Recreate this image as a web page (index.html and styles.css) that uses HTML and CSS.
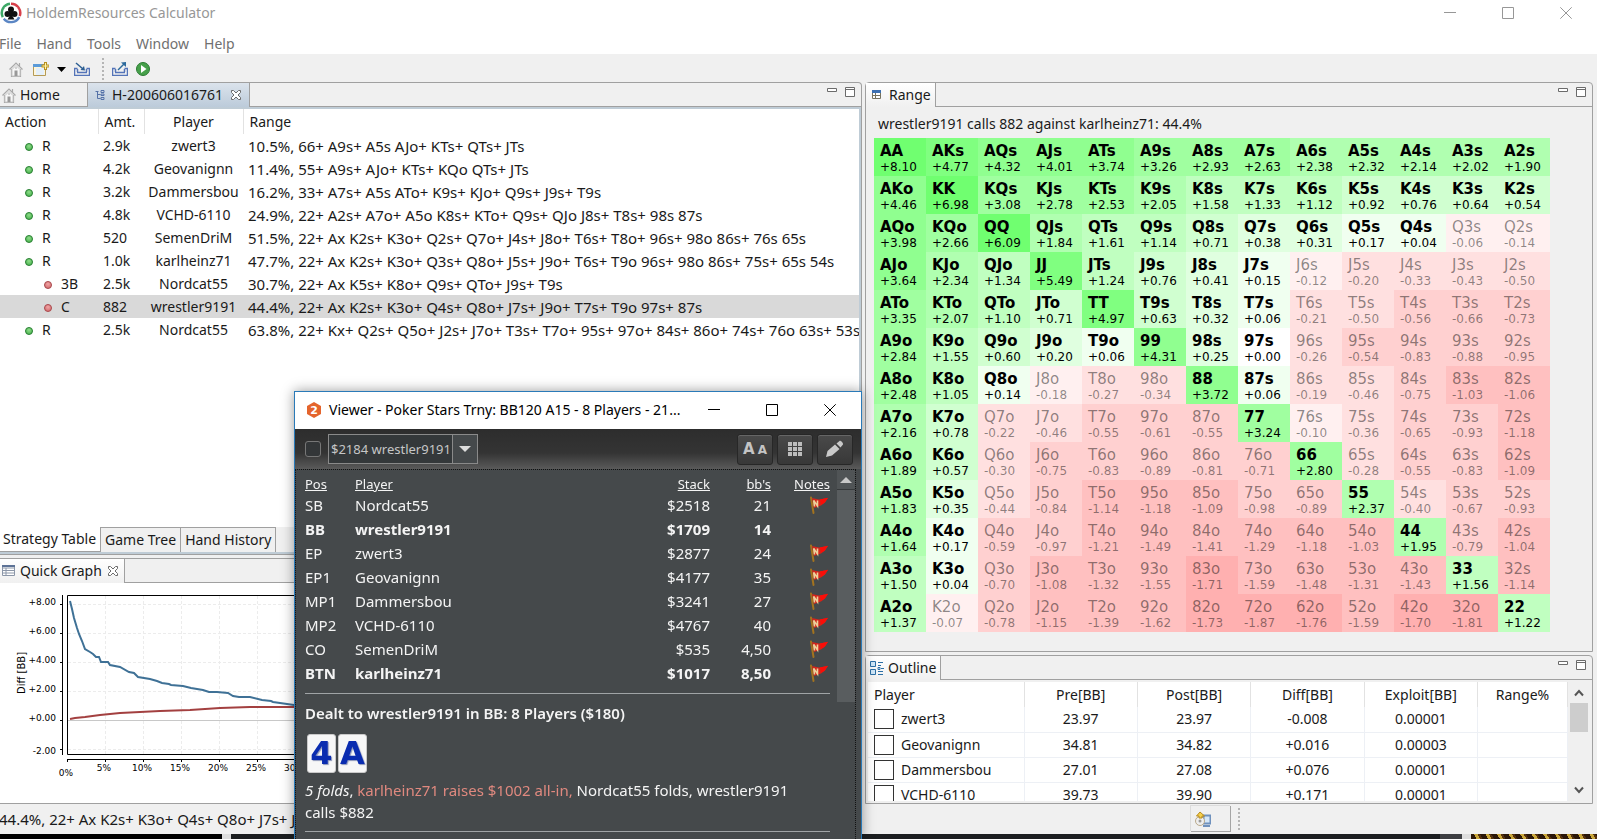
FILE: index.html
```html
<!DOCTYPE html>
<html lang="en">
<head>
    <meta charset="UTF-8">
    <meta name="viewport" content="width=device-width, initial-scale=1.0">
    <title>HoldemResources Calculator</title>
    <link rel="stylesheet" href="styles.css">
</head>
<body>

    <!-- shared icons -->
    <svg class="sprite" aria-hidden="true">
        <symbol id="house" viewBox="0 0 14 16">
            <path d="M2.5 8v7.5h9V8M.5 8.500 7 2l6.500 6.500M10.500 5V2" fill="none" stroke="#a9a9a9" stroke-width="1.200"/>
            <path d="M3 8.500 7 4.500l4 4V15H3z" fill="#f7f7f7" stroke="#c9c9c9"/>
            <path d="M5.500 9.500h3V15h-3z" fill="#999"/>
            <path d="M7 6v2" stroke="#aaa"/>
        </symbol>
        <symbol id="cross" viewBox="0 0 12 12">
            <path d="M1.500 1.500h2L6 4l2.500-2.500h2v2L8 6l2.500 2.500v2h-2L6 8l-2.500 2.500h-2v-2L4 6 1.500 3.500z" fill="#fff" stroke="#6b6b6b"/>
        </symbol>
        <symbol id="part-min" viewBox="0 0 10 10"><path d="M.5 1.500h9v3h-9z" fill="#fff" stroke="#6b6b6b"/></symbol>
        <symbol id="part-max" viewBox="0 0 10 10"><path d="M.5.5h9v9h-9zM.5 2.500h9" fill="#fff" stroke="#6b6b6b"/></symbol>
        <symbol id="win-min" viewBox="0 0 12 12"><path d="M0 5.500h12" fill="none" stroke="currentColor"/></symbol>
        <symbol id="win-max" viewBox="0 0 12 12"><path d="M.5.5h11v11H.5z" fill="none" stroke="currentColor"/></symbol>
        <symbol id="win-close" viewBox="0 0 12 12"><path d="m.3.3 11.400 11.400M11.700.3.3 11.700" fill="none" stroke="currentColor"/></symbol>
        <symbol id="flag" viewBox="0 0 20 18">
            <path d="M2 1.500 4.500 17" stroke="#a3731f" stroke-width="2" stroke-linecap="round"/>
            <path d="M3 2 10 3.500l9-1.500-3 4.500-4 3-7 2.500z" fill="#d3261c"/>
            <path d="M11 3.500 19 1.800l-3.500 5-3.500 2z" fill="#fb0d08"/>
            <path d="m5.500 10.500-.8-6 3.800 5.500V4.500" fill="none" stroke="#ecd29c" stroke-width="1.600"/>
        </symbol>
    </svg>

    <!-- title bar -->
    <header class="titlebar">
        <svg class="app-icon" viewBox="0 0 22 22" aria-hidden="true">
            <path d="M11 2a9 9 0 0 1 8.500 12" fill="none" stroke="#d8404a" stroke-width="3"/>
            <path d="M19 15a9 9 0 0 1-15 1.500" fill="none" stroke="#5b86c4" stroke-width="3"/>
            <path d="M3 15A9 9 0 0 1 10 2" fill="none" stroke="#3da866" stroke-width="3"/>
            <circle cx="11" cy="11" r="8" fill="#fff"/>
            <g fill="#111"><circle cx="11" cy="7.500" r="3"/><circle cx="7.500" cy="12" r="3"/><circle cx="14.500" cy="12" r="3"/><path d="M10 9h2l.5 5 2 3.500h-7l2-3.500z"/></g>
        </svg>
        <h1>HoldemResources Calculator</h1>
        <div class="window-buttons">
            <button type="button" aria-label="Minimize"><svg width="12" height="12"><use href="#win-min"/></svg></button>
            <button type="button" aria-label="Maximize"><svg width="12" height="12"><use href="#win-max"/></svg></button>
            <button type="button" aria-label="Close"><svg width="12" height="12"><use href="#win-close"/></svg></button>
        </div>
    </header>

    <nav class="menubar">
        <button type="button">File</button>
        <button type="button">Hand</button>
        <button type="button">Tools</button>
        <button type="button">Window</button>
        <button type="button">Help</button>
    </nav>

    <div class="toolbar">
        <button type="button" aria-label="Home"><svg width="14" height="16"><use href="#house"/></svg></button>
        <button type="button" class="tool-new" aria-label="New hand">
            <svg width="16" height="15" viewBox="0 0 16 15">
                <path d="M.5 2.500h12v11H.5z" fill="#fdf6dc" stroke="#b59a55"/>
                <path d="M0 2h10v3H0z" fill="#5b9bd9"/>
                <path d="M3 6h8v7H3z" fill="#e4effa"/>
                <path d="M12.500 0v8M8.500 4h8" stroke="#b8901f" stroke-width="3"/>
                <path d="M12.500 1v6M9.500 4h6" stroke="#fff3a8"/>
            </svg>
        </button>
        <button type="button" class="tool-menu" aria-label="New menu"><svg width="9" height="5"><path d="M0 0h9L4.500 5z"/></svg></button>
        <button type="button" class="tool-import" aria-label="Import">
            <svg width="16" height="14" viewBox="0 0 16 14">
                <path d="M3.500 6.500h-3v7h15v-7h-3M3 10.500h10M3.500 7v3M12.500 7v3" fill="none" stroke="#5474b8" stroke-width="1.500"/>
                <path d="m2 1 7 6" stroke="#2d5f93" stroke-width="1.500"/><path d="M11 8.500 6.500 8 10 4z" fill="#2d5f93"/>
            </svg>
        </button>
        <span class="grip"></span>
        <button type="button" class="tool-export" aria-label="Export">
            <svg width="16" height="14" viewBox="0 0 16 14">
                <path d="M3.500 6.500h-3v7h15v-7h-3M3 10.500h10M3.500 7v3M12.500 7v3" fill="none" stroke="#5474b8" stroke-width="1.500"/>
                <path d="m6 8 6-6" stroke="#2d6a9c" stroke-width="1.500"/><path d="M14 0v5L9 .5z" fill="#2d6a9c"/>
            </svg>
        </button>
        <button type="button" aria-label="Run">
            <svg width="14" height="14" viewBox="0 0 14 14">
                <circle cx="7" cy="7" r="6.500" fill="#46a04a" stroke="#2b7a33"/>
                <path d="M5 3v8l5.500-4z" fill="#fff"/>
            </svg>
        </button>
    </div>

    <!-- workbench -->
    <main class="workbench">
        <div class="column">
            <section class="part editor">
                <div class="tabs">
                    <button type="button" class="tab home"><svg width="14" height="16"><use href="#house"/></svg>Home</button>
                    <button type="button" class="tab active">
                        <svg width="10" height="12" viewBox="0 0 10 12"><path d="M.5 2.500h3M2.500 2.500v7h3M2.500 5.500h3M6 1.500h3v2H6zM6 5h3v1.500H6zM6 8.500h3v2H6z" fill="none" stroke="#5673a8"/></svg>
                        H-200606016761
                        <svg width="12" height="12"><use href="#cross"/></svg>
                    </button>
                    <div class="part-buttons">
                        <button type="button" aria-label="Minimize"><svg width="10" height="10"><use href="#part-min"/></svg></button>
                        <button type="button" aria-label="Maximize"><svg width="10" height="10"><use href="#part-max"/></svg></button>
                    </div>
                </div>
                <div class="strategy-wrap">
                    <table class="strategy">
                        <thead>
                            <tr><th class="c-action">Action</th><th class="c-amt">Amt.</th><th class="c-player">Player</th><th class="c-range">Range</th></tr>
                        </thead>
                        <tbody>
                            <tr><td><i class="dot"></i>R</td><td>2.9k</td><td>zwert3</td><td>10.5%, 66+ A9s+ A5s AJo+ KTs+ QTs+ JTs</td></tr>
                            <tr><td><i class="dot"></i>R</td><td>4.2k</td><td>Geovanignn</td><td>11.4%, 55+ A9s+ AJo+ KTs+ KQo QTs+ JTs</td></tr>
                            <tr><td><i class="dot"></i>R</td><td>3.2k</td><td>Dammersbou</td><td>16.2%, 33+ A7s+ A5s ATo+ K9s+ KJo+ Q9s+ J9s+ T9s</td></tr>
                            <tr><td><i class="dot"></i>R</td><td>4.8k</td><td>VCHD-6110</td><td>24.9%, 22+ A2s+ A7o+ A5o K8s+ KTo+ Q9s+ QJo J8s+ T8s+ 98s 87s</td></tr>
                            <tr><td><i class="dot"></i>R</td><td>520</td><td>SemenDriM</td><td>51.5%, 22+ Ax K2s+ K3o+ Q2s+ Q7o+ J4s+ J8o+ T6s+ T8o+ 96s+ 98o 86s+ 76s 65s</td></tr>
                            <tr><td><i class="dot"></i>R</td><td>1.0k</td><td>karlheinz71</td><td>47.7%, 22+ Ax K2s+ K3o+ Q3s+ Q8o+ J5s+ J9o+ T6s+ T9o 96s+ 98o 86s+ 75s+ 65s 54s</td></tr>
                            <tr class="child"><td><i class="dot"></i>3B</td><td>2.5k</td><td>Nordcat55</td><td>30.7%, 22+ Ax K5s+ K8o+ Q9s+ QTo+ J9s+ T9s</td></tr>
                            <tr class="child selected"><td><i class="dot"></i>C</td><td>882</td><td>wrestler9191</td><td>44.4%, 22+ Ax K2s+ K3o+ Q4s+ Q8o+ J7s+ J9o+ T7s+ T9o 97s+ 87s</td></tr>
                            <tr><td><i class="dot"></i>R</td><td>2.5k</td><td>Nordcat55</td><td>63.8%, 22+ Kx+ Q2s+ Q5o+ J2s+ J7o+ T3s+ T7o+ 95s+ 97o+ 84s+ 86o+ 74s+ 76o 63s+ 53s+</td></tr>
                        </tbody>
                    </table>
                </div>
                <div class="bottom-tabs">
                    <button type="button" class="active">Strategy Table</button>
                    <button type="button">Game Tree</button>
                    <button type="button">Hand History</button>
                </div>
            </section>

            <section class="part graph">
                <div class="tabs">
                    <button type="button" class="tab active">
                        <svg width="13" height="11" viewBox="0 0 13 11"><path d="M.5.5h12v10H.5zM.5 3h12M.5 5.500h12M.5 8h12M4 3v7.500" fill="#fff" stroke="#8b96a8"/><path d="M0 0h13v2H0z" fill="#5d7296"/></svg>
                        Quick Graph
                        <svg width="12" height="12"><use href="#cross"/></svg>
                    </button>
                </div>
                <svg class="chart" width="100%" height="220">
                    <g stroke="#ececec" stroke-dasharray="3 2">
                        <path d="M68 21.500h800M68 50.500h800M68 79.500h800M68 108.500h800M68 166.500h800"/>
                        <path d="M105.500 13v158M143.500 13v158M181.500 13v158M219.500 13v158M257.500 13v158M295.500 13v158"/>
                    </g>
                    <path d="M68 137.500h800" stroke="#c8c8c8"/>
                    <path d="M900 12.500H67.500v159H900M62.500 12v160M60 21.500h2M60 50.500h2M60 79.500h2M60 108.500h2M60 137.500h2M60 166.500h2M67 176.500h833M67.500 177v2M105.500 177v2M143.500 177v2M181.500 177v2M219.500 177v2M257.500 177v2M295.500 177v2" fill="none" stroke="#000"/>
                    <polyline fill="none" stroke="#a34040" stroke-width="2" points="70,136 75,135 85,134 100,132 120,130 140,129 160,128 190,127 220,125 250,124 294,124 330,123"/>
                    <polyline fill="none" stroke="#3f7196" stroke-width="2" points="70,18 72,26 74,35 77,45 79,51 82,58 85,66 90,69 93,71 96,74 99,74 101,79 108,79 110,82 120,84 129,89 134,90 138,94 150,96 157,98 162,100 169,101 171,102 183,103 191,105 203,107 209,109 217,109 228,110 233,113 239,114 250,114 262,117 271,118 273,119 280,120 294,122 330,125"/>
                    <g class="chart-y">
                        <text x="56" y="22">+8.00</text><text x="56" y="51">+6.00</text><text x="56" y="80">+4.00</text><text x="56" y="109">+2.00</text><text x="56" y="138">+0.00</text><text x="56" y="171">-2.00</text>
                    </g>
                    <g class="chart-x">
                        <text x="66" y="193">0%</text><text x="104" y="188">5%</text><text x="142" y="188">10%</text><text x="180" y="188">15%</text><text x="218" y="188">20%</text><text x="256" y="188">25%</text><text x="294" y="188">30%</text>
                    </g>
                    <text class="chart-title" transform="translate(25 90) rotate(-90)">Diff [BB]</text>
                </svg>
            </section>
        </div>

        <div class="column">
            <section class="part range">
                <div class="tabs">
                    <button type="button" class="tab active">
                        <svg width="9" height="9" viewBox="0 0 9 9"><path d="M.5.5h8v8h-8zM.5 5.500h8M3.500 2v7" fill="#fff" stroke="#77735f"/><path d="M0 0h9v3H0z" fill="#3c6fb0"/></svg>
                        Range
                    </button>
                    <div class="part-buttons">
                        <button type="button" aria-label="Minimize"><svg width="10" height="10"><use href="#part-min"/></svg></button>
                        <button type="button" aria-label="Maximize"><svg width="10" height="10"><use href="#part-max"/></svg></button>
                    </div>
                </div>
                <div class="range-body">
                    <p>wrestler9191 calls 882 against karlheinz71: 44.4%</p>
                    <table class="matrix" id="matrix"></table>
                </div>
            </section>

            <section class="part outline">
                <div class="tabs">
                    <button type="button" class="tab active">
                        <svg width="14" height="16" viewBox="0 0 14 16"><path d="M.5 1.500h5v5h-5zM.5 9.500h5v5h-5z" fill="#cfe6f7" stroke="#2c6fa5"/><path d="M8 2.500h5M8 5.500h3M8 7.500h2v2H8zM11 8.500h3M8 11.500h5M8 14.500h5" fill="none" stroke="#2c6fa5"/></svg>
                        Outline
                    </button>
                    <div class="part-buttons">
                        <button type="button" aria-label="Minimize"><svg width="10" height="10"><use href="#part-min"/></svg></button>
                        <button type="button" aria-label="Maximize"><svg width="10" height="10"><use href="#part-max"/></svg></button>
                    </div>
                </div>
                <div class="outline-body">
                    <div class="outline-scroll">
                        <table>
                            <thead>
                                <tr><th class="c-name">Player</th><th>Pre[BB]</th><th>Post[BB]</th><th>Diff[BB]</th><th>Exploit[BB]</th><th class="c-pct">Range%</th></tr>
                            </thead>
                            <tbody>
                                <tr><td><label><input type="checkbox">zwert3</label></td><td>23.97</td><td>23.97</td><td>-0.008</td><td>0.00001</td><td></td></tr>
                                <tr><td><label><input type="checkbox">Geovanignn</label></td><td>34.81</td><td>34.82</td><td>+0.016</td><td>0.00003</td><td></td></tr>
                                <tr><td><label><input type="checkbox">Dammersbou</label></td><td>27.01</td><td>27.08</td><td>+0.076</td><td>0.00001</td><td></td></tr>
                                <tr><td><label><input type="checkbox">VCHD-6110</label></td><td>39.73</td><td>39.90</td><td>+0.171</td><td>0.00001</td><td></td></tr>
                            </tbody>
                        </table>
                    </div>
                    <div class="scrollbar">
                        <svg width="10" height="8" viewBox="0 0 10 8"><path d="m1 6.500 4-4.500 4 4.500" fill="none" stroke="#555" stroke-width="2"/></svg>
                        <span class="thumb"></span>
                        <svg width="10" height="8" viewBox="0 0 10 8"><path d="m1 1.500 4 4.500 4-4.500" fill="none" stroke="#555" stroke-width="2"/></svg>
                    </div>
                </div>
            </section>
        </div>
    </main>

    <!-- status bar -->
    <footer class="statusbar">
        <span class="status-text">44.4%, 22+ Ax K2s+ K3o+ Q4s+ Q8o+ J7s+ J9o+ T7s+ T9o 97s+ 87s</span>
        <button type="button" class="status-update" aria-label="Updates">
            <svg width="16" height="16" viewBox="0 0 16 16">
                <path d="M8.500 4.500h7v8h-7z" fill="#d5e7f8" stroke="#6f91bd" stroke-width="2"/><path d="M8 15h7" stroke="#6f91bd" stroke-width="2"/>
                <circle cx="5" cy="10" r="4.500" fill="#eee" stroke="#b9a98a"/><circle cx="5" cy="10" r="1.500" fill="#999"/>
                <path d="M5 1 1.500 5H4v2h3V5h2.500z" fill="#f5d04c" stroke="#b88b1e"/>
            </svg>
        </button>
        <span class="grip"></span>
    </footer>
    <div class="desktop"><span class="d-black"></span><span class="d-light"></span><span class="d-dark"></span><span class="d-grey"></span><span class="d-light"></span><span class="d-photo"></span></div>

    <!-- hand viewer window -->
    <section class="viewer">
        <header class="viewer-title">
            <svg width="16" height="16" viewBox="0 0 16 16" aria-hidden="true">
                <path d="M8 0l7 4v8l-7 4-7-4V4z" fill="#e4642c"/>
                <text class="badge-digit" x="8" y="12">2</text>
            </svg>
            <h2>Viewer - Poker Stars Trny: BB120 A15 - 8 Players - 21...</h2>
            <div class="window-buttons">
                <button type="button" aria-label="Minimize"><svg width="12" height="12"><use href="#win-min"/></svg></button>
                <button type="button" aria-label="Maximize"><svg width="12" height="12"><use href="#win-max"/></svg></button>
                <button type="button" aria-label="Close"><svg width="12" height="12"><use href="#win-close"/></svg></button>
            </div>
        </header>
        <div class="viewer-bar">
            <input type="checkbox" aria-label="Lock hand">
            <div class="hand-select">
                <select aria-label="Hand"><option>$2184 wrestler9191</option></select>
                <span class="arrow"></span>
            </div>
            <div class="viewer-tools">
                <button type="button" aria-label="Font size"><span class="big-a">A</span><span class="small-a">A</span></button>
                <button type="button" aria-label="Grid">
                    <svg width="14" height="14" fill="#bdbdbd"><path d="M0 0h4v4H0zM5 0h4v4H5zM10 0h4v4h-4zM0 5h4v4H0zM5 5h4v4H5zM10 5h4v4h-4zM0 10h4v4H0zM5 10h4v4H5zM10 10h4v4h-4z"/></svg>
                </button>
                <button type="button" aria-label="Edit">
                    <svg width="20" height="18" viewBox="0 0 20 18" fill="#c9c9c9"><path d="m1 17 1.500-6L10 4.500l4.500 4.500L7 15.500zM11.500 3.500 14.500 1c1-.8 4 2 3.500 3.500L15.500 7.500z"/></svg>
                </button>
            </div>
        </div>
        <div class="viewer-body">
            <div class="viewer-content">
                <table>
                    <thead>
                        <tr><th class="c-pos">Pos</th><th>Player</th><th class="c-stack">Stack</th><th class="c-bbs">bb's</th><th class="c-notes">Notes</th></tr>
                    </thead>
                    <tbody>
                        <tr><td>SB</td><td>Nordcat55</td><td>$2518</td><td>21</td><td><svg width="20" height="18"><use href="#flag"/></svg></td></tr>
                        <tr class="strong"><td>BB</td><td>wrestler9191</td><td>$1709</td><td>14</td><td></td></tr>
                        <tr><td>EP</td><td>zwert3</td><td>$2877</td><td>24</td><td><svg width="20" height="18"><use href="#flag"/></svg></td></tr>
                        <tr><td>EP1</td><td>Geovanignn</td><td>$4177</td><td>35</td><td><svg width="20" height="18"><use href="#flag"/></svg></td></tr>
                        <tr><td>MP1</td><td>Dammersbou</td><td>$3241</td><td>27</td><td><svg width="20" height="18"><use href="#flag"/></svg></td></tr>
                        <tr><td>MP2</td><td>VCHD-6110</td><td>$4767</td><td>40</td><td><svg width="20" height="18"><use href="#flag"/></svg></td></tr>
                        <tr><td>CO</td><td>SemenDriM</td><td>$535</td><td>4,50</td><td><svg width="20" height="18"><use href="#flag"/></svg></td></tr>
                        <tr class="strong"><td>BTN</td><td>karlheinz71</td><td>$1017</td><td>8,50</td><td><svg width="20" height="18"><use href="#flag"/></svg></td></tr>
                    </tbody>
                </table>
                <hr>
                <h3>Dealt to wrestler9191 in BB: 8 Players ($180)</h3>
                <div class="cards"><span>4</span><span>A</span></div>
                <p><em>5 folds</em>, <span class="raise">karlheinz71 raises $1002 all-in,</span> Nordcat55 folds, wrestler9191 calls $882</p>
                <hr>
            </div>
            <div class="viewer-scroll"><span class="up"></span><span class="thumb"></span></div>
        </div>
    </section>

    <script src="matrix.js"></script>
</body>
</html>
```

FILE: styles.css
```css
* {
    box-sizing: border-box;
}

body {
    margin: 0;
    height: 100vh;
    display: flex;
    flex-direction: column;
    overflow: hidden;
    background: #f0f0f0;
    color: #1a1a1a;
    font-family: "Noto Sans", "Open Sans", sans-serif;
    font-size: 14px;
    line-height: 20px;
}

button {
    margin: 0;
    padding: 0;
    border: 0;
    background: none;
    color: inherit;
    font: inherit;
    white-space: nowrap;
}

svg {
    display: block;
    flex: none;
}

table {
    border-collapse: collapse;
    table-layout: fixed;
    width: 100%;
}

th, td {
    padding: 0;
    font-weight: normal;
    white-space: nowrap;
}

h1, h2, h3, p {
    margin: 0;
    font-size: inherit;
    font-weight: normal;
}

.sprite {
    position: absolute;
    width: 0;
    height: 0;
}

/* title bar and menu */
.titlebar {
    display: flex;
    align-items: center;
    height: 26px;
    background: #fff;
    color: #979797;
}

.app-icon {
    width: 22px;
    height: 22px;
    margin-right: 4px;
}

.window-buttons {
    display: flex;
    margin-left: auto;
}

.window-buttons button {
    display: flex;
    justify-content: center;
    width: 58px;
}

.titlebar .window-buttons {
    padding-right: 2px;
}

.menubar {
    display: flex;
    gap: 15px;
    height: 28px;
    padding-top: 7px;
    margin-left: -1px;
    background: #fff;
    color: #707070;
}

/* toolbar */
.toolbar {
    display: flex;
    align-items: center;
    height: 28px;
    padding: 2px 0 0 9px;
}

.toolbar button {
    margin-right: 10px;
}

.toolbar .tool-new,
.toolbar .tool-menu,
.toolbar .tool-export {
    margin-right: 8px;
}

.grip {
    height: 22px;
    border-left: 2px dotted #b5b5b5;
}

.toolbar .grip {
    margin: 0 8px 0 2px;
}

/* workbench parts */
.workbench {
    flex: 1;
    min-height: 0;
    display: grid;
    grid-template-columns: 862fr 728fr;
    column-gap: 3px;
    padding-right: 4px;
}

.column {
    display: flex;
    flex-direction: column;
    gap: 3px;
    min-width: 0;
    min-height: 0;
}

.part {
    display: flex;
    flex-direction: column;
    min-height: 0;
    border: 1px solid #a0a0a0;
    border-radius: 4px 4px 0 0;
}

.column:first-child .part {
    border-left: 0;
    border-top-left-radius: 0;
}

.tabs {
    display: flex;
    height: 24px;
    border-bottom: 1px solid #a0a0a0;
}

.tab {
    display: flex;
    align-items: center;
    gap: 8px;
    height: 24px;
    padding: 0 4px 1px 6px;
}

.tab.active {
    border-right: 1px solid #a0a0a0;
    background: linear-gradient(#fff, #f0f0f0);
}

.part-buttons {
    display: flex;
    gap: 8px;
    margin: 4px 6px 0 auto;
}

.part-buttons button {
    height: 10px;
}

.editor {
    flex: 1;
}

.editor .tab.home {
    width: 87px;
    gap: 4px;
    padding-left: 2px;
}

.editor .tab.active {
    gap: 7px;
    padding: 0 7px 1px;
    border-left: 1px solid #a0a0a0;
    background: linear-gradient(#dbe3ec, #bccbda);
}

.strategy-wrap {
    flex: 1;
    overflow: hidden;
    border-top: 2px solid #bfccd6;
    border-right: 2px solid #bfccd6;
    background: #fff;
}

.strategy td,
.strategy th {
    height: 23px;
    line-height: 22px;
    text-align: left;
    overflow: hidden;
}

.strategy th {
    height: 25px;
    border-right: 1px solid #e2e2e2;
}

.strategy th:last-child {
    border-right: 0;
}

.strategy .c-action { width: 98px; padding-left: 5px; }
.strategy .c-amt { width: 46px; padding-left: 6px; }
.strategy .c-player { width: 99px; text-align: center; }
.strategy .c-range { padding-left: 6px; }

.strategy td:nth-child(1) { padding-left: 25px; }
.strategy td:nth-child(2) { padding-left: 5px; }
.strategy td:nth-child(3) { text-align: center; }
.strategy td:nth-child(4) { padding-left: 5px; font-size: 15px; }
.strategy .child td:nth-child(1) { padding-left: 44px; }

.strategy .selected {
    background: #d9d9d9;
}

.dot {
    display: inline-block;
    width: 8px;
    height: 8px;
    margin-right: 9px;
    border: 1px solid #2c8036;
    border-radius: 50%;
    background: radial-gradient(circle at 3px 2px, #8fdc8a, #3fae45);
}

.child .dot {
    border-color: #a84a4e;
    background: radial-gradient(circle at 3px 2px, #f0a5a5, #d06468);
}

.bottom-tabs {
    display: flex;
    height: 27px;
    border-bottom: 2px solid #bfccd6;
    background: #f0f0f0;
}

.bottom-tabs button {
    padding: 0 4px;
    border: solid #a0a0a0;
    border-width: 1px 1px 0 0;
}

.bottom-tabs .active {
    padding-left: 3px;
    border-width: 0 1px 1px 0;
    background: #fff;
}

.graph {
    flex: none;
}

.graph .tab.active {
    padding: 0 5px 1px 2px;
    gap: 5px;
}

.chart {
    background: #fff;
    font-family: "DejaVu Sans", sans-serif;
    font-size: 9px;
}

.chart-y { text-anchor: end; }
.chart-x { text-anchor: middle; }

.chart-title {
    font-size: 10px;
    text-anchor: middle;
}

/* range matrix */
.range {
    flex: 1;
}

.range-body {
    padding: 4px 0 0 8px;
}

.range-body p {
    padding: 3px 4px;
    margin-bottom: 1px;
}

.matrix {
    width: 676px;
    color: #000;
    font-family: "DejaVu Sans", sans-serif;
    font-size: 12px;
    line-height: 16px;
}

.matrix td {
    height: 38px;
    padding: 3px 0 0 6px;
}

.matrix b {
    display: block;
    font-size: 15px;
}

.matrix .fold { color: rgba(0, 0, 0, 0.45); }
.matrix .fold b { font-weight: normal; }

.pos0 { background: #fff; }
.pos1 { background: #f0fff0; }
.pos2 { background: #e0ffe0; }
.pos3 { background: #d0ffd0; }
.pos4 { background: #c0ffc0; }
.pos5 { background: #b0ffb0; }
.pos6 { background: #a0ffa0; }
.pos7 { background: #90ff90; }
.pos8 { background: #80ff80; }
.pos9 { background: #70ff70; }
.neg1 { background: #fff0f0; }
.neg2 { background: #ffe0e0; }
.neg3 { background: #ffd0d0; }
.neg4 { background: #ffc0c0; }
.neg5 { background: #ffb0b0; }

/* outline table */
.outline {
    flex: none;
    height: 149px;
}

.outline .tab.active {
    gap: 4px;
    padding-left: 4px;
}

.outline-body {
    flex: 1;
    min-height: 0;
    display: flex;
    margin: 2px;
}

.outline-scroll {
    flex: 1;
    overflow: hidden;
    background: #fff;
}

.outline th,
.outline td {
    height: 25px;
    line-height: 24px;
    text-align: center;
    border: solid #edf0f5;
    border-width: 0 1px 1px 0;
}

.outline th {
    border-bottom: 0;
    border-color: #e2e2e2;
}

.outline .c-name {
    width: 156px;
    padding-left: 6px;
    text-align: left;
}

.outline .c-pct {
    width: 90px;
}

.outline td:first-child {
    padding-left: 6px;
}

.outline label {
    display: flex;
    align-items: center;
    gap: 7px;
}

.outline input {
    appearance: none;
    width: 20px;
    height: 20px;
    margin: 0;
    border: 1px solid #333;
    background: #fff;
}

.scrollbar {
    display: flex;
    flex-direction: column;
    align-items: center;
    width: 22px;
    padding: 7px 0;
}

.scrollbar .thumb {
    width: 18px;
    height: 29px;
    margin: 6px 0 auto;
    background: #cdcdcd;
}

/* status bar */
.statusbar {
    display: flex;
    align-items: center;
    height: 30px;
}

.status-text {
    width: 1192px;
    margin-left: -1px;
    font-size: 15px;
}

.status-update {
    display: flex;
    align-items: center;
    width: 40px;
    height: 26px;
    margin-right: 7px;
    padding-left: 4px;
    border: solid #a5a5a5;
    border-width: 0 1px 1px 0;
    box-shadow: -1px -1px #dcdcdc;
}

.desktop {
    display: flex;
    height: 5px;
}

.d-black { width: 222px; background: #000; }
.d-light { width: 9px; background: #ddd; }
.d-dark { flex: 1; background: #1c1e20; }
.d-grey { width: 22px; background: #3d3e42; }
.d-photo { width: 126px; background: repeating-linear-gradient(60deg, #2a1608 0 5px, #c9a63a 5px 8px, #54300e 8px 10px); }

/* viewer window */
.viewer {
    position: fixed;
    top: 391px;
    bottom: 0;
    left: 294px;
    width: 568px;
    display: flex;
    flex-direction: column;
    border: solid #2a7ab8;
    border-width: 1px 1px 0;
    background: #45494b;
    color: #f4f4f4;
    font-size: 15px;
    box-shadow: 0 0 12px rgba(0, 0, 0, 0.4);
}

.viewer-title {
    display: flex;
    align-items: center;
    height: 37px;
    padding: 0 2px 1px 11px;
    background: #fff;
    color: #000;
    font-size: 14px;
}

.viewer-title h2 {
    margin-left: 7px;
}

.badge-digit {
    fill: #fff;
    font-family: "DejaVu Sans", sans-serif;
    font-size: 11px;
    font-weight: bold;
    text-anchor: middle;
}

.viewer-bar {
    display: flex;
    align-items: center;
    height: 40px;
    padding: 0 8px 0 10px;
    background: linear-gradient(#2d2d2d 0, #343434 60%, #5a5a5a);
}

.viewer-bar input {
    appearance: none;
    width: 16px;
    height: 16px;
    margin: 0 7px 0 0;
    border: 1px solid #777;
    border-radius: 3px;
    background: #333638;
}

.hand-select {
    display: flex;
    width: 150px;
    height: 30px;
    border: 1px solid #8a8a8a;
    background: #34383a;
}

.hand-select select {
    appearance: none;
    flex: 1;
    min-width: 0;
    margin-right: 3px;
    padding: 0 0 0 2px;
    border: 0;
    background: none;
    color: #c6c6c6;
    font-family: inherit;
    font-size: 13px;
    text-overflow: clip;
}

.hand-select .arrow {
    display: flex;
    align-items: center;
    justify-content: center;
    width: 25px;
    border-left: 1px solid #8a8a8a;
    background: #45494b;
}

.hand-select .arrow::before {
    content: "";
    border: 6px solid transparent;
    border-top-color: #ddd;
    border-bottom: 0;
}

.viewer-tools {
    display: flex;
    gap: 4px;
    margin-left: auto;
}

.viewer-tools button {
    display: flex;
    align-items: center;
    justify-content: center;
    gap: 3px;
    width: 36px;
    height: 31px;
    border: 1px solid #272727;
    border-radius: 3px;
    background: linear-gradient(#4a4a4a, #383838);
    box-shadow: inset 0 1px #666;
    color: #c4c4c4;
    font-family: "DejaVu Sans", sans-serif;
    font-weight: bold;
}

.big-a { font-size: 15px; }
.small-a { font-size: 12px; padding-top: 2px; }

.viewer-body {
    flex: 1;
    min-height: 0;
    display: flex;
    margin-right: 5px;
    border: 1px dotted #111;
    border-bottom: 0;
    overflow: hidden;
}

.viewer-content {
    flex: 1;
    padding: 5px 7px 0 9px;
}

.viewer-content th,
.viewer-content td {
    height: 24px;
    line-height: 24px;
    text-align: left;
}

.viewer-content th {
    height: 18px;
    line-height: 18px;
    font-size: 13px;
    text-decoration: underline;
}

.viewer-content .strong {
    font-weight: bold;
}

.viewer-content .strong td {
    font-weight: inherit;
}

.viewer-content .c-pos { width: 50px; }
.viewer-content .c-stack { width: 70px; }
.viewer-content .c-bbs { width: 61px; }
.viewer-content .c-notes { width: 59px; }

.viewer-content th:nth-child(n + 3),
.viewer-content td:nth-child(n + 3) {
    text-align: right;
}

.viewer-content td svg {
    margin: 0 1px 0 auto;
}

.viewer-content hr {
    margin: 8px 0 9px;
    border: 0;
    border-top: 1px solid #a0a4a6;
}

.viewer-content h3 {
    font-size: 15px;
    font-weight: 600;
}

.cards {
    display: flex;
    gap: 2px;
    margin: 11px 0 6px 2px;
}

.cards span {
    width: 29px;
    height: 39px;
    border: 1px solid #c9c9c9;
    border-radius: 3px;
    background: #f7f7f7;
    color: #0a2cb0;
    font: bold 32px/37px "DejaVu Sans", sans-serif;
    text-align: center;
    text-shadow: 1px 1px 1px #8a94b8;
}

.viewer-content p {
    padding-right: 12px;
    line-height: 22px;
}

.viewer-content .raise {
    color: #e0897f;
}

.viewer-scroll {
    width: 18px;
    display: flex;
    flex-direction: column;
}

.viewer-scroll .up {
    height: 20px;
    display: flex;
    align-items: center;
    justify-content: center;
    border-bottom: 1px solid #36393b;
    background: #505456;
}

.viewer-scroll .up::before {
    content: "";
    border: 6px solid transparent;
    border-bottom-color: #c8c8c8;
    border-top: 0;
}

.viewer-scroll .thumb {
    height: 212px;
    background: #595d5f;
}
```

FILE: matrix.js
```js
// EV of every starting hand, row by row from AA to 22
const ranks = 'AKQJT98765432';
const values = [
    '+8.10 +4.77 +4.32 +4.01 +3.74 +3.26 +2.93 +2.63 +2.38 +2.32 +2.14 +2.02 +1.90',
    '+4.46 +6.98 +3.08 +2.78 +2.53 +2.05 +1.58 +1.33 +1.12 +0.92 +0.76 +0.64 +0.54',
    '+3.98 +2.66 +6.09 +1.84 +1.61 +1.14 +0.71 +0.38 +0.31 +0.17 +0.04 -0.06 -0.14',
    '+3.64 +2.34 +1.34 +5.49 +1.24 +0.76 +0.41 +0.15 -0.12 -0.20 -0.33 -0.43 -0.50',
    '+3.35 +2.07 +1.10 +0.71 +4.97 +0.63 +0.32 +0.06 -0.21 -0.50 -0.56 -0.66 -0.73',
    '+2.84 +1.55 +0.60 +0.20 +0.06 +4.31 +0.25 +0.00 -0.26 -0.54 -0.83 -0.88 -0.95',
    '+2.48 +1.05 +0.14 -0.18 -0.27 -0.34 +3.72 +0.06 -0.19 -0.46 -0.75 -1.03 -1.06',
    '+2.16 +0.78 -0.22 -0.46 -0.55 -0.61 -0.55 +3.24 -0.10 -0.36 -0.65 -0.93 -1.18',
    '+1.89 +0.57 -0.30 -0.75 -0.83 -0.89 -0.81 -0.71 +2.80 -0.28 -0.55 -0.83 -1.09',
    '+1.83 +0.35 -0.44 -0.84 -1.14 -1.18 -1.09 -0.98 -0.89 +2.37 -0.40 -0.67 -0.93',
    '+1.64 +0.17 -0.59 -0.97 -1.21 -1.49 -1.41 -1.29 -1.18 -1.03 +1.95 -0.79 -1.04',
    '+1.50 +0.04 -0.70 -1.08 -1.32 -1.55 -1.71 -1.59 -1.48 -1.31 -1.43 +1.56 -1.14',
    '+1.37 -0.07 -0.78 -1.15 -1.39 -1.62 -1.73 -1.87 -1.76 -1.59 -1.70 -1.81 +1.22'
];
const steps = [0, 0.185, 0.52, 1, 1.63, 2.45, 3.5, 4.6, 6];

function handName(row, col) {
    if (row === col) return ranks[row] + ranks[col];
    return row < col ? ranks[row] + ranks[col] + 's' : ranks[col] + ranks[row] + 'o';
}

function shade(value) {
    const level = steps.filter(step => Math.abs(value) > step).length;
    return (value < 0 ? 'neg' : 'pos') + level;
}

const matrix = document.getElementById('matrix');
values.forEach((line, row) => {
    const tr = matrix.insertRow();
    line.split(' ').forEach((text, col) => {
        const td = tr.insertCell();
        td.className = shade(parseFloat(text)) + (text[0] === '-' ? ' fold' : '');
        td.innerHTML = `<b>${handName(row, col)}</b>${text}`;
    });
});
```
